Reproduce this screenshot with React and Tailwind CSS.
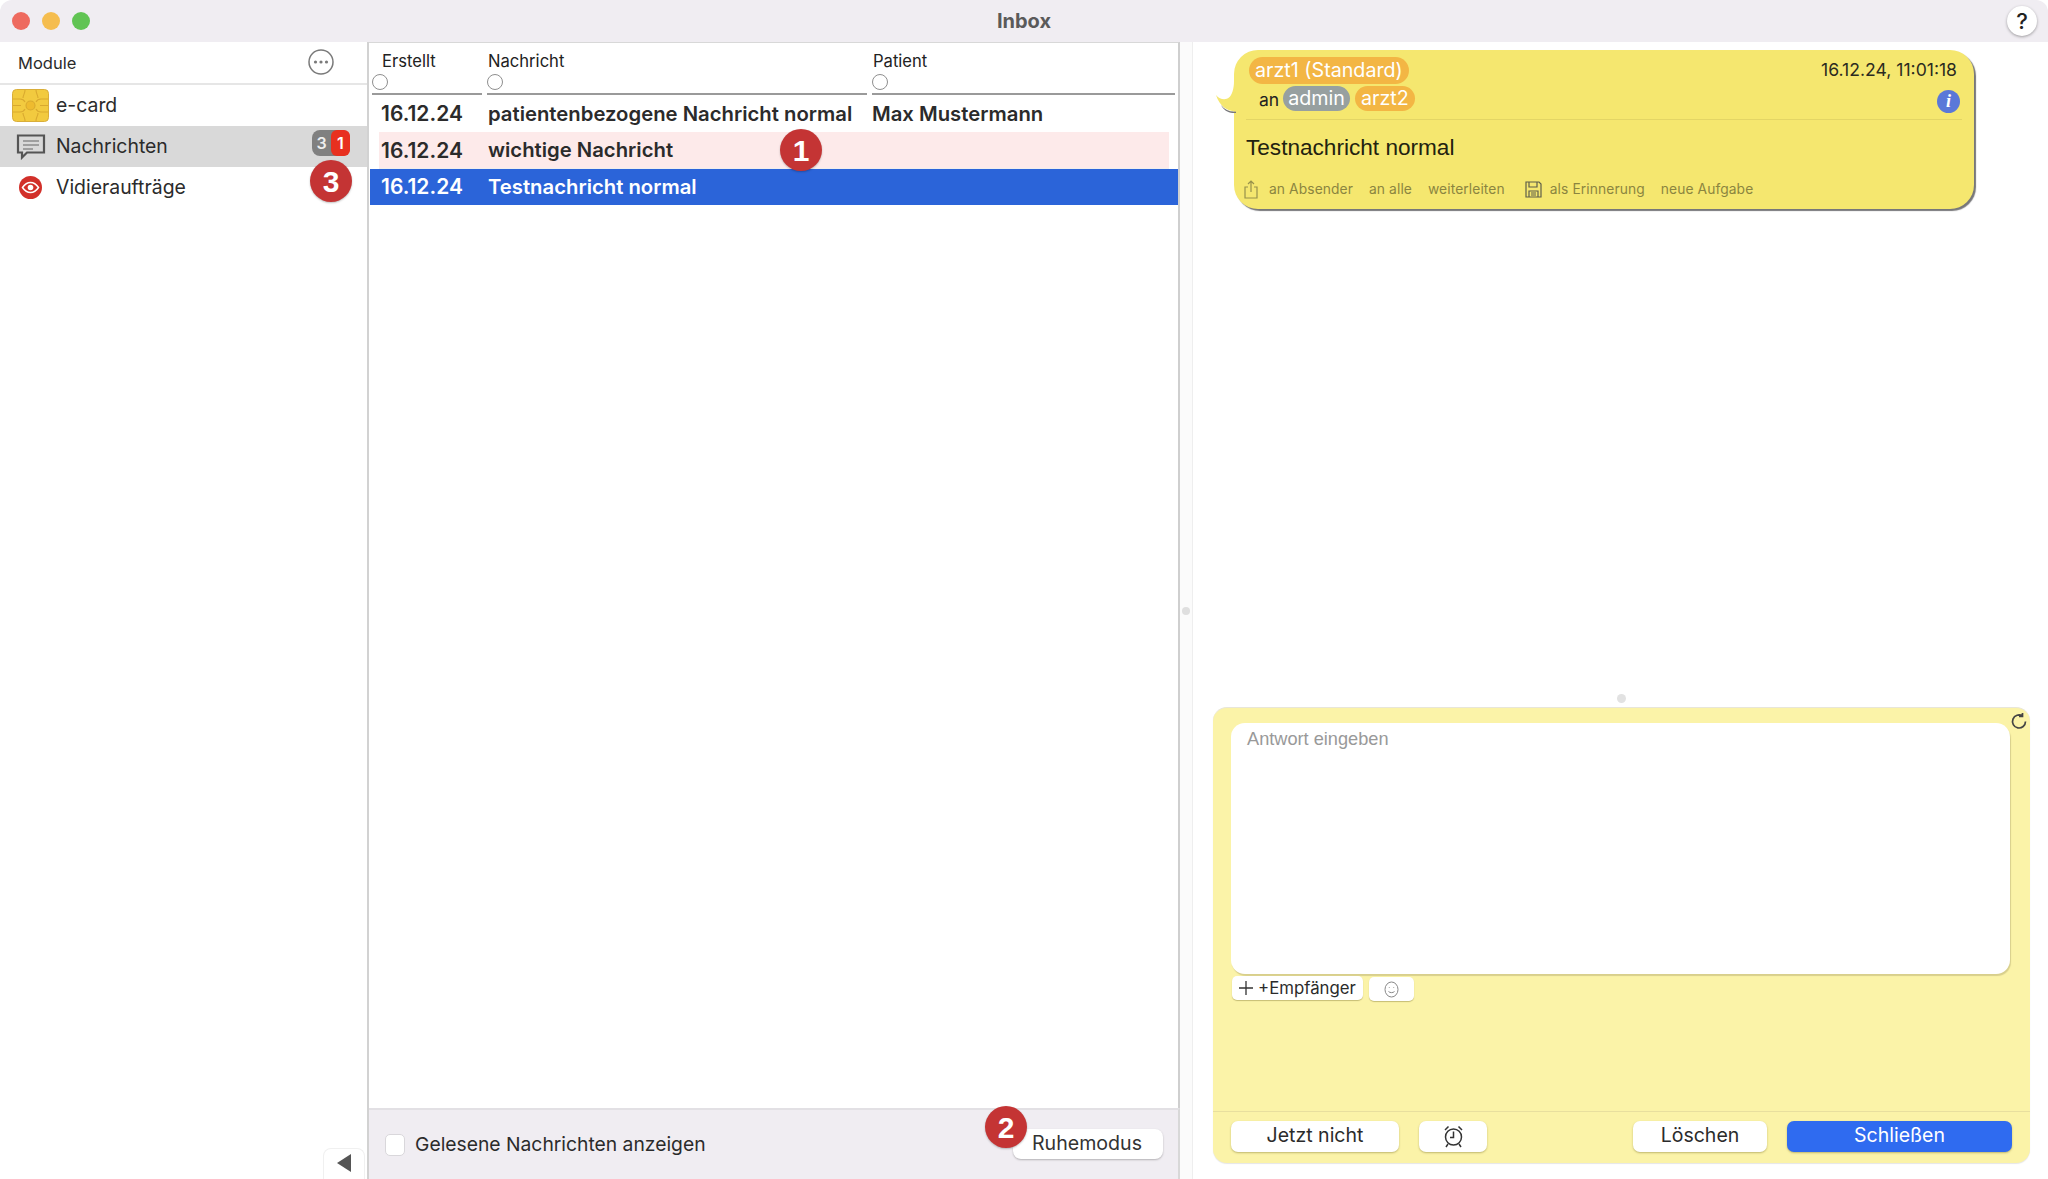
import React from "react";

const Num = ({ n, className }) => (
  <div className={"absolute w-[42px] h-[42px] rounded-full bg-[#c43434] text-white flex items-center justify-center text-[30px] font-bold font-['Liberation_Sans',sans-serif] z-20 shadow-[0_1px_2px_rgba(0,0,0,0.25)] " + className}>{n}</div>
);

const Chip = () => (
  <svg width="37" height="33" viewBox="0 0 37 33" className="shrink-0">
    <rect x="0.5" y="0.5" width="36" height="32" rx="4" fill="#f2ca3f" stroke="#d9ae3a" />
    <g fill="none" stroke="#d9a92f" strokeWidth="1.100">
      <path d="M1 10h7c2 0 4 1 5 3M1 23h7c2 0 4-1 5-3M36 10h-7c-2 0-4 1-5 3M36 23h-7c-2 0-4-1-5-3M13 1c0 4-2 5-2 8M24 1c0 4 2 5 2 8M13 32c0-4-2-5-2-8M24 32c0-4 2-5 2-8M1 16.500h8M36 16.500h-8" />
      <circle cx="18.500" cy="16.500" r="4.500" fill="#eebb2f" />
    </g>
  </svg>
);

const Bubble = () => (
  <svg width="30" height="26" viewBox="0 0 30 26" fill="none" stroke="#555" strokeWidth="2.200">
    <path d="M2 1.500h26v17H11l-5 5v-5H2z" />
    <path d="M7 7h16M7 11h16M7 15h10" strokeWidth="1.100" stroke="#666" />
  </svg>
);

const Eye = () => (
  <svg width="23" height="23" viewBox="0 0 23 23">
    <circle cx="11.500" cy="11.500" r="11.500" fill="#d2302a" />
    <path d="M3.500 11.500C6 7.800 8.600 6.500 11.500 6.500s5.500 1.300 8 5c-2.500 3.700-5.100 5-8 5s-5.500-1.300-8-5z" fill="none" stroke="#fff" strokeWidth="1.500" />
    <circle cx="11.500" cy="11.500" r="2.800" fill="#fff" />
  </svg>
);

const SideRow = ({ icon, label, active, children }) => (
  <div className={"relative h-[41px] flex items-center pl-[12px] " + (active ? "bg-[#d9d9d9]" : "")}>
    <div className="w-[37px] flex justify-center shrink-0">{icon}</div>
    <span className="ml-[7px] pt-[1px] text-[19.400px] text-[#2b2b2b]">{label}</span>
    {children}
  </div>
);

const Radio = () => <div className="w-[16px] h-[16px] rounded-full border border-[#8f8f8f] bg-white" />;

const HeadCell = ({ label, className }) => (
  <div className={"h-[52px] border-b-2 border-[#9a9a9a] relative " + className}>
    <div className="absolute top-[8px] text-[16.600px] leading-[20px] text-[#222] left-[1px]">{label}</div>
    <div className="absolute top-[31px] left-0"><Radio /></div>
  </div>
);

const Row = ({ cells, className }) => (
  <div className={"grid grid-cols-[107px_384px_1fr] items-center text-[20.300px] font-semibold " + className}>
    {cells.map((c, i) => <span key={i} className={"truncate " + (i === 0 ? "text-[21px]" : "")}>{c}</span>)}
  </div>
);

const Tag = ({ children, className }) => (
  <span className={"inline-flex items-center rounded-full text-white text-[19.700px] " + className}>{children}</span>
);

const Btn = ({ children, className }) => (
  <button className={"h-[31px] rounded-[7px] bg-white text-[19.500px] text-[#2b2b2b] shadow-[0_1px_2px_rgba(120,110,40,0.45)] flex items-center justify-center pb-[2px] " + className}>{children}</button>
);

export default function App() {
  return (
    <div className="w-[2048px] h-[1179px] overflow-hidden flex flex-col bg-white font-['Inter','Liberation_Sans',sans-serif] relative">
      <header className="h-[42px] shrink-0 bg-[#f0edf2] rounded-t-[12px] flex items-center relative">
        <div className="flex gap-[12px] pl-[12px]">
          <span className="w-[18px] h-[18px] rounded-full bg-[#ee6a5f]" />
          <span className="w-[18px] h-[18px] rounded-full bg-[#f5bd4f]" />
          <span className="w-[18px] h-[18px] rounded-full bg-[#61c454]" />
        </div>
        <div className="absolute inset-x-0 text-center text-[20px] font-bold text-[#5a5a5a]">Inbox</div>
        <button className="ml-auto mr-[11px] w-[30px] h-[30px] rounded-full bg-white shadow-[0_1px_3px_rgba(0,0,0,0.35)] flex items-center justify-center text-[22px] font-medium text-[#222]">?</button>
      </header>

      <div className="flex-1 flex min-h-0">
        <aside className="w-[369px] shrink-0 border-r-2 border-[#d2d2d2] flex flex-col relative">
          <div className="h-[43px] shrink-0 border-b-2 border-[#e6e6e6] flex items-center pl-[18px] pr-[33px]">
            <span className="text-[16.500px] text-[#2b2b2b] pt-[2px]">Module</span>
            <svg width="26" height="26" viewBox="0 0 26 26" className="ml-auto mt-[-1px]">
              <circle cx="13" cy="13" r="12" fill="none" stroke="#7a7a7a" strokeWidth="1.500" />
              <circle cx="7.500" cy="13" r="1.600" fill="#7a7a7a" />
              <circle cx="13" cy="13" r="1.600" fill="#7a7a7a" />
              <circle cx="18.500" cy="13" r="1.600" fill="#7a7a7a" />
            </svg>
          </div>
          <SideRow icon={<Chip />} label="e-card" />
          <SideRow icon={<Bubble />} label="Nachrichten" active>
            <div className="absolute left-[312px] top-[4px] w-[38px] h-[26px] rounded-[8px] bg-[#808080] flex text-[16px] font-semibold text-white leading-[26px]">
              <span className="w-[19px] text-center text-[#eee]">3</span>
              <span className="w-[19px] text-center rounded-[6px] bg-[#e8301f]">1</span>
            </div>
          </SideRow>
          <SideRow icon={<Eye />} label="Vidieraufträge" />
          <Num n="3" className="left-[310px] top-[118px]" />
          <div className="mt-auto self-end mr-[2px] w-[42px] h-[31px] rounded-t-[8px] bg-white border border-b-0 border-[#f0f0f0] flex items-center justify-center pb-[2px]">
            <svg width="14" height="18" viewBox="0 0 14 18"><path d="M14 0v18L0 9z" fill="#555" /></svg>
          </div>
        </aside>

        <main className="w-[811px] shrink-0 flex flex-col relative">
          <div className="flex-1 min-h-0 border-t border-[#d8d8d8] border-r-2 border-r-[#cfcfcf] pl-[1px] bg-white text-[#2b2b2b]">
            <div className="flex pl-[2px] pr-[3px] h-[53px]">
              <HeadCell label={<span className="pl-[9px]">Erstellt</span>} className="w-[110px]" />
              <HeadCell label="Nachricht" className="w-[380px] ml-[5px]" />
              <HeadCell label="Patient" className="flex-1 ml-[5px]" />
            </div>
            <Row className="h-[36px] pl-[11px]" cells={["16.12.24", "patientenbezogene Nachricht normal", "Max Mustermann"]} />
            <Row className="h-[37px] pl-[2px] pt-[1px] mx-[9px] bg-[#fdeaea] border-b border-[#eee]" cells={["16.12.24", "wichtige Nachricht", ""]} />
            <Row className="h-[36px] pl-[11px] bg-[#2b64d9] text-white" cells={["16.12.24", "Testnachricht normal", ""]} />
          </div>
          <Num n="1" className="left-[411px] top-[87px]" />
          <footer className="h-[71px] shrink-0 bg-[#f0edf2] border-t-2 border-t-[#e2e0e4] border-r-2 border-r-[#d8d8d8] flex items-center pl-[16px] pr-[15px] relative">
            <span className="w-[20px] h-[22px] rounded-[5px] bg-white border border-[#d9d7db]" />
            <span className="ml-[10px] text-[19.300px] text-[#2b2b2b]">Gelesene Nachrichten anzeigen</span>
            <button className="ml-auto mt-[-2px] w-[150px] h-[30px] rounded-[8px] bg-white text-[19.600px] text-[#333] pr-[2px] shadow-[0_1px_2px_rgba(0,0,0,0.25)]">Ruhemodus</button>
            <Num n="2" className="left-[616px] top-[-4px]" />
          </footer>
        </main>

        <div className="w-[13px] shrink-0 bg-[#fbfbfb] border-r border-[#eeeeee] flex items-center justify-center">
          <span className="w-[8px] h-[8px] rounded-full bg-[#dfdfdf] mb-[-1px]" />
        </div>

        <section className="flex-1 flex flex-col min-w-0 bg-white">
          <div className="ml-[41px] mt-[8px] w-[740px] h-[159px] rounded-[24px] bg-[#f5e76f] shadow-[2px_2px_1px_#77777a] relative flex flex-col px-[12px] shrink-0">
            <svg width="24" height="32" viewBox="0 -14 24 32" className="absolute left-[-18px] top-[31px]">
              <path d="M5 10C9 15 14 17 20 16.500L20 18C13 18.500 8 16 5 10Z" fill="#77777a" />
              <path d="M0 0C4 5 10 5 13 2.500C16 0 18 -6 18 -14L24 -14V16.500C12 17.500 4 12 0 0Z" fill="#f5e76f" />
            </svg>
            <div className="flex items-start pt-[7px] h-[70px] border-b border-[#e3d565]">
              <div className="pl-[3px]">
                <Tag className="bg-[#f3b644] h-[27px] px-[6px]">arzt1 (Standard)</Tag>
                <div className="flex items-center mt-[2px] pl-[10px] h-[25px]">
                  <span className="text-[17.500px] text-[#222] mr-[4px] mt-[3px]">an</span>
                  <Tag className="bg-[#97a0a0] h-[25px] px-[5px] mr-[5px]">admin</Tag>
                  <Tag className="bg-[#f3b644] h-[25px] px-[6px]">arzt2</Tag>
                </div>
              </div>
              <div className="ml-auto pr-[5px] flex flex-col items-end">
                <span className="text-[17.600px] leading-[26px] text-[#2b2b1f]">16.12.24, 11:01:18</span>
                <span className="mt-[7px] w-[23px] h-[23px] rounded-full bg-[#5a78d8] text-white flex items-center justify-center italic font-bold text-[18px] font-['Liberation_Serif',serif] mr-[-3px]">i</span>
              </div>
            </div>
            <div className="mt-[14px] text-[22.600px] leading-[28px] text-[#22220f] font-['Liberation_Sans',sans-serif]">Testnachricht normal</div>
            <div className="flex items-center mt-[17px] h-[20px] text-[13.800px] text-[#8b8540] tracking-[0.100px] ml-[-2px]">
              <svg width="14" height="19" viewBox="0 0 14 19" fill="none" stroke="#97914c" strokeWidth="1.200">
                <path d="M4 7H1v11h12V7h-3M7 12V1M4 4l3-3 3 3" />
              </svg>
              <span className="ml-[11px]">an Absender</span>
              <span className="ml-[16px]">an alle</span>
              <span className="ml-[16px]">weiterleiten</span>
              <svg width="17" height="17" viewBox="0 0 17 17" fill="none" stroke="#5f5f4a" strokeWidth="1.200" className="ml-[20px]">
                <path d="M1 1h13l2 2v13H1zM4 1v5h8V1M4 16v-6h9v6M6 12h5M6 14h5" />
              </svg>
              <span className="ml-[8px]">als Erinnerung</span>
              <span className="ml-[16px]">neue Aufgabe</span>
            </div>
          </div>

          <div className="mt-auto flex flex-col items-center pb-[16px] ml-[20px] mr-[18px]">
            <span className="w-[9px] h-[9px] rounded-full bg-[#e2e2e2] mb-[4px]" />
            <div className="w-[817px] h-[456px] rounded-[14px] bg-[#fbf3a8] border-t border-[#e8e6d8] flex flex-col relative shadow-[0_1px_1px_#e6e6e6]">
              <svg width="18" height="18" viewBox="0 0 18 18" fill="none" stroke="#444" strokeWidth="1.700" className="absolute right-[2px] top-[4px]">
                <path d="M15.500 9.500a6.500 6.500 0 1 1-3-5.500M12.500 1v3.500H9" />
              </svg>
              <div className="pl-[18px] pt-[15px]">
                <textarea
                  readOnly
                  placeholder="Antwort eingeben"
                  className="block w-[779px] h-[251px] resize-none rounded-[14px] bg-white pl-[16px] pt-[4px] text-[18.200px] leading-[24px] placeholder:text-[#999] font-['Liberation_Sans',sans-serif] shadow-[1px_2px_1px_#d8cf8c] outline-none"
                />
                <div className="flex items-start mt-[2px] gap-[6px] pl-[1px]">
                  <button className="w-[131px] h-[24px] rounded-[5px] bg-white shadow-[0_1px_1px_rgba(120,110,40,0.4)] flex items-center justify-center gap-[5px] text-[16.800px] text-[#2b2b2b]">
                    <svg width="14" height="14" viewBox="0 0 14 14" stroke="#333" strokeWidth="1.300"><path d="M7 0v14M0 7h14" /></svg>
                    <span className="pt-[1px]">+Empfänger</span>
                  </button>
                  <button className="w-[45px] h-[24px] mt-[1px] rounded-[5px] bg-white shadow-[0_1px_1px_rgba(120,110,40,0.4)] flex items-center justify-center">
                    <svg width="15" height="17" viewBox="0 0 15 17" fill="none" stroke="#888" strokeWidth="1">
                      <ellipse cx="7.500" cy="8.500" rx="6.500" ry="7.500" />
                      <path d="M4.500 10.500c1.500 1.500 4.500 1.500 6 0M5.300 6v.7M9.700 6v.7" />
                    </svg>
                  </button>
                </div>
              </div>
              <div className="mt-auto h-[52px] border-t border-[#e8df9e] flex items-start pt-[9px] pl-[18px] pr-[18px]">
                <Btn className="w-[168px]">Jetzt nicht</Btn>
                <Btn className="w-[68px] ml-[20px]">
                  <svg width="21" height="24" viewBox="0 0 21 24" fill="none" stroke="#333" strokeWidth="1.500">
                    <circle cx="10.500" cy="13" r="8" />
                    <path d="M10.500 7.500v6H7M2 6 5.500 2.500M19 6 15.500 2.500M5 20l-2 3M16 20l2 3" />
                  </svg>
                </Btn>
                <Btn className="w-[134px] ml-auto">Löschen</Btn>
                <Btn className="w-[225px] ml-[20px] !bg-[#2f6bf0] !text-white">Schließen</Btn>
              </div>
            </div>
          </div>
        </section>
      </div>
    </div>
  );
}
